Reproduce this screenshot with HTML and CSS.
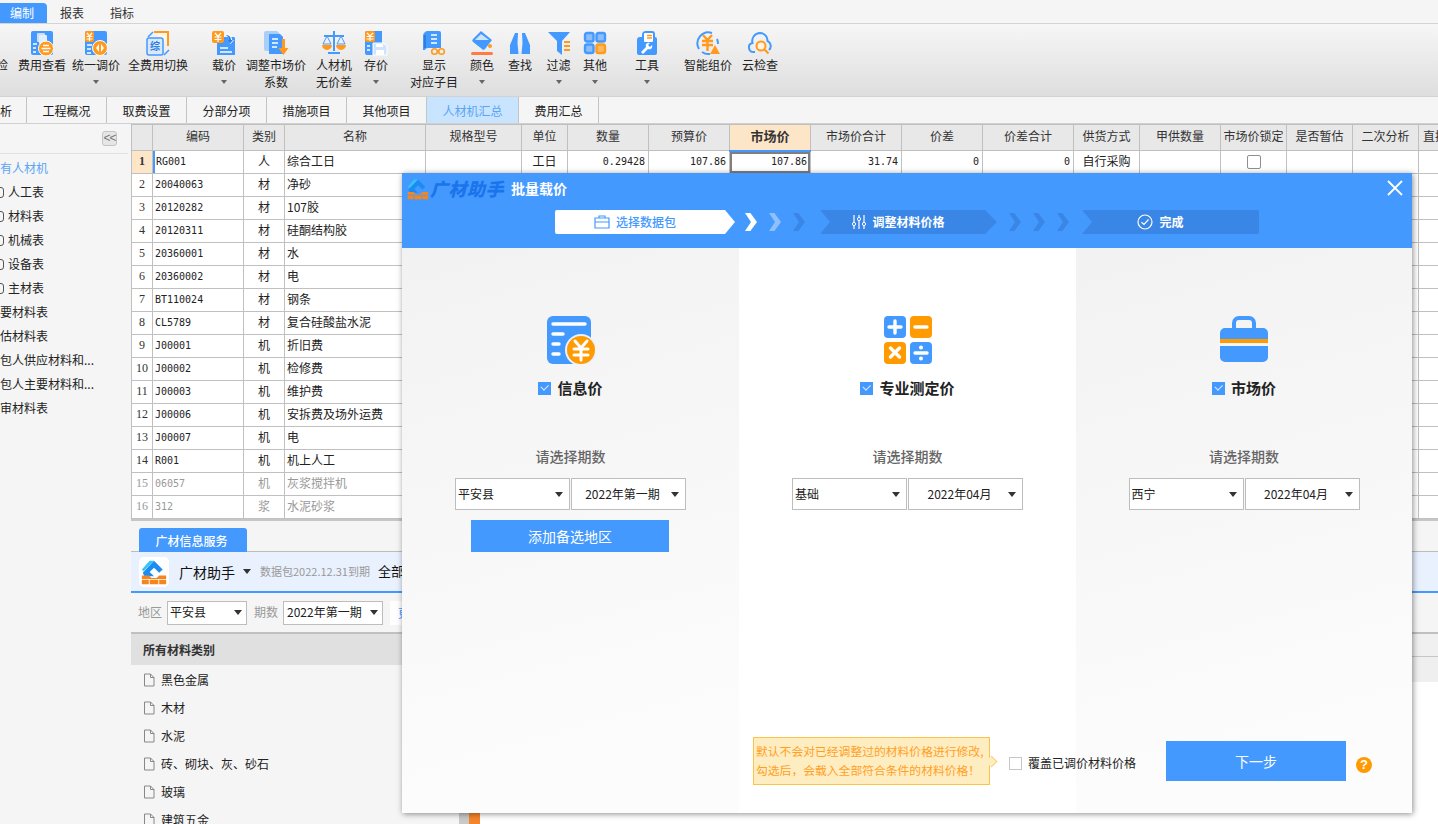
FILE: index.html
```html
<!DOCTYPE html>
<html lang="zh-CN">
<head>
<meta charset="utf-8">
<title>批量载价</title>
<link rel="stylesheet" href="styles.css">
</head>
<body>
<svg class="defs" width="0" height="0" aria-hidden="true">
  <symbol id="logo" viewBox="0 0 30 30">
    <path d="M15 2 25 12 21 16 15 10 10 15 15 20H4L2 16Z" fill="#1c8cf5"/>
    <path d="M10 2h5L3 14 1 12Z" fill="#35c4f5"/>
    <path d="M1 19h8l3 3h6l3-3h8v4H1ZM1 24h8v5H1ZM10 24h10v5H10ZM21 24h8v5h-8Z" fill="#f5851f"/>
  </symbol>
  <symbol id="file" viewBox="0 0 12 14">
    <path d="M1.500 1h6l3.500 3.500v8.500h-9.500ZM7.500 1v3.500h3.500" fill="none" stroke="#888" stroke-width="1"/>
  </symbol>
</svg>
<div class="app">
  <nav class="menu">
    <span class="menu-item active">编制</span>
    <span class="menu-item">报表</span>
    <span class="menu-item">指标</span>
  </nav>

  <div class="ribbon">
    <div class="rb w48"><div class="ic"></div><span>自检</span></div>
    <div class="rb w44"><svg class="ic" width="24" height="25" viewBox="0 0 24 25"><rect x="1" width="22" height="24" rx="2" fill="#4499ff"/><rect x="7" y="2" width="8" height="9" rx="1" fill="#c9def8"/><rect x="9" y="4" width="8" height="9" rx="1" fill="#e4eefb"/><path d="M3 13h4M3 17h3M3 21h3" stroke="#fff" stroke-width="1.6"/><circle cx="16" cy="17.500" r="7.500" fill="#ff9a1f" stroke="#fff"/><path d="M11.500 17.500h9M13 14.500h6M13 20.500h6" stroke="#fff" stroke-width="1.500"/></svg><span>费用查看</span><i class="caret none"></i></div>
    <div class="rb w64"><svg class="ic" width="24" height="25" viewBox="0 0 24 25"><rect x="1" width="22" height="24" rx="2" fill="#4499ff"/><rect x="1" width="9" height="11" rx="2" fill="#ff9a1f"/><path d="M3 2l2.500 3L8 2M2.500 5.500h6M2.500 8h6M5.500 5v5" stroke="#fff" stroke-width="1.200" fill="none"/><path d="M3 14h5M3 18h4M3 22h4" stroke="#fff" stroke-width="1.600"/><circle cx="16" cy="17" r="7.500" fill="#ff9a1f" stroke="#fff"/><path d="M15 13v8l-3-4ZM17 13v8l3-4Z" fill="#fff"/></svg><span>统一调价</span><i class="caret"></i></div>
    <div class="rb w60"><svg class="ic" width="24" height="25" viewBox="0 0 24 25"><path d="M8 1h14v14" fill="#fff6e8" stroke="#ff9a1f" stroke-width="2"/><rect x="1" y="7" width="16" height="17" rx="2" fill="#d9e8fb" stroke="#4499ff" stroke-width="1.500"/><text x="9" y="19" class="ic-text">综</text><path d="M2 6 7 1M18 24l5-5" stroke="#4499ff" stroke-width="1.500"/></svg><span>全费用切换</span></div>
    <div class="rb w44 ml14"><svg class="ic" width="24" height="25" viewBox="0 0 24 25"><path d="M4 6h18a1.500 1.500 0 0 1 1 1.500V24H5V10Z" fill="#4499ff"/><rect x="0" y="0" width="12" height="12" rx="2" fill="#ff9a1f"/><path d="M3 2l3 3.500L9 2M2.500 6h7M2.500 8.500h7M6 5.500V11" stroke="#fff" stroke-width="1.200" fill="none"/><path d="M8 17h8M8 21h12" stroke="#fff" stroke-width="1.600"/><path d="M14 3c4 0 6 3 6 6h2l-3.500 4L15 9h2c0-2-1-4-3-6Z" fill="#fff"/><path d="M14 4c3.500 0 5 2.500 5 5h2l-3 3.500L15 9h2c0-2-1-4-3-5Z" fill="#2f7fe0"/></svg><span>载价</span><i class="caret"></i></div>
    <div class="rb w60"><svg class="ic" width="26" height="25" viewBox="0 0 26 25"><path d="M3 0h11l6 6v14H3a2 2 0 0 1-2-2V2a2 2 0 0 1 2-2Z" fill="#a9cff8"/><path d="M6 3h11l3 3v17H6Z" fill="#4499ff"/><path d="M9 8h6M9 12h6M9 16h5" stroke="#fff" stroke-width="1.600"/><path d="M19 8h3v9h3.500L20.500 24 15.500 17H19Z" fill="#ff9a1f"/></svg><span>调整市场价</span><span>系数</span></div>
    <div class="rb w56"><svg class="ic" width="24" height="25" viewBox="0 0 24 25"><path d="M12 0v20M2 5h20M6 22h12" stroke="#4499ff" stroke-width="2"/><path d="M5 5 1 13h8ZM19 5l-4 8h8Z" fill="none" stroke="#4499ff"/><path d="M0 14h10a5 5 0 0 1-10 0ZM14 14h10a5 5 0 0 1-10 0Z" fill="#ff9a1f"/></svg><span>人材机</span><span>无价差</span></div>
    <div class="rb w28"><svg class="ic" width="24" height="25" viewBox="0 0 24 25"><path d="M3 0h15v24H3a2 2 0 0 1-2-2V2a2 2 0 0 1 2-2Z" fill="#4499ff"/><rect x="1" width="10" height="11" rx="2" fill="#ff9a1f"/><path d="M3 2l3 3 3-3M2.500 5.500h7M2.500 8h7M6 5v5" stroke="#fff" stroke-width="1.200" fill="none"/><path d="M3 15h3M3 19h3" stroke="#fff" stroke-width="1.500"/><path d="M9 12h10l4 3v9H9Z" fill="#cfe3fb" stroke="#fff"/><rect x="12" y="13" width="7" height="3" fill="#fff"/><rect x="12" y="19" width="8" height="5" fill="#fff"/></svg><span>存价</span><i class="caret"></i></div>
    <div class="rb w48 ml20"><svg class="ic" width="24" height="25" viewBox="0 0 24 25"><path d="M6 0h11a2 2 0 0 1 2 2v15H6a3 3 0 0 0-3 2h-2V5a5 5 0 0 1 5-5Z" fill="#4499ff"/><path d="M3 4v13" stroke="#2f7fe0" stroke-width="2"/><path d="M9 4h6M9 8h6M9 12h6" stroke="#fff" stroke-width="1.600"/><circle cx="12.500" cy="20.500" r="2.800" fill="none" stroke="#ff9a1f" stroke-width="1.600"/><circle cx="19.500" cy="20.500" r="2.800" fill="none" stroke="#ff9a1f" stroke-width="1.600"/></svg><span>显示</span><span>对应子目</span></div>
    <div class="rb w48"><svg class="ic" width="24" height="25" viewBox="0 0 24 25"><path d="M11 0 22 9l-7 9a2 2 0 0 1-3 0L3 11a2 2 0 0 1 0-3Z" fill="#4499ff"/><path d="M11 3 19 9H5Z" fill="#cfe3fb"/><circle cx="20" cy="15" r="2" fill="#ff9a1f"/><rect x="1" y="21" width="22" height="3" rx="1.500" fill="#ff7a45"/></svg><span>颜色</span><i class="caret"></i></div>
    <div class="rb w28"><svg class="ic" width="22" height="25" viewBox="0 0 22 25"><path d="M6 2h3L8.500 12l1 11H1V14ZM16 2h-3l.5 10-1 11h8.500V14Z" fill="#4499ff"/></svg><span>查找</span></div>
    <div class="rb w49"><svg class="ic" width="24" height="25" viewBox="0 0 24 25"><path d="M1 1h22l-8 9v14l-5-4v-10Z" fill="#4499ff"/><path d="M17 11h6M17 15h6M17 19h6" stroke="#ff9a1f" stroke-width="1.800"/></svg><span>过滤</span><i class="caret"></i></div>
    <div class="rb w24"><svg class="ic" width="24" height="25" viewBox="0 0 24 25"><g stroke-width="2.400" fill="#8dbdf8"><rect x="2" y="2" width="8.500" height="8.500" rx="2" stroke="#4499ff"/><rect x="13.500" y="2" width="8.500" height="8.500" rx="2" stroke="#4499ff"/><rect x="2" y="13.500" width="8.500" height="8.500" rx="2" stroke="#4499ff"/><rect x="13.500" y="13.500" width="8.500" height="8.500" rx="2" stroke="#ff9a1f" fill="#ffb95c"/></g></svg><span>其他</span><i class="caret"></i></div>
    <div class="rb w24 ml28"><svg class="ic" width="20" height="25" viewBox="0 0 20 25"><path d="M3 6h2V4a4 4 0 0 1 4-4h6a3 3 0 0 1 3 3v3h0a2 2 0 0 1 2 2v14a2 2 0 0 1-2 2H2a2 2 0 0 1-2-2V9a3 3 0 0 1 3-3Z" fill="#4499ff"/><rect x="7" y="2" width="9" height="9" rx="1" fill="#fff"/><path d="M10 4.500h5M10 7h5" stroke="#ff9a1f" stroke-width="1.400"/><path d="M4 21l5-5a3 3 0 0 1 4-4l-2 2 2 2 2-2a3 3 0 0 1-4 4l-5 5Z" fill="#fff"/></svg><span>工具</span><i class="caret"></i></div>
    <div class="rb w48 ml25"><svg class="ic" width="26" height="25" viewBox="0 0 26 25"><path d="M4 18A11 11 0 0 1 17 2" fill="none" stroke="#4499ff" stroke-width="2"/><path d="M7 21a11 11 0 0 0 8 2M22 8a11 11 0 0 1 1 5" fill="none" stroke="#4499ff" stroke-width="2"/><path d="M8 4l4.500 5L17 4M7 10h11M7 14h11M12.500 9v11" stroke="#ff9a1f" stroke-width="2.400" fill="none"/><path d="M20 14l5 9H15Z" fill="#ff9a1f"/></svg><span>智能组价</span></div>
    <div class="rb w36 ml10"><svg class="ic" width="24" height="25" viewBox="0 0 24 25"><path d="M7 21H5.500a4.500 4.500 0 0 1-1-8.900A8 8 0 0 1 12 2a7.500 7.500 0 0 1 7.500 8 5.500 5.500 0 0 1 1.500 9" fill="none" stroke="#4499ff" stroke-width="2"/><circle cx="13" cy="15" r="4.500" fill="#fff4e4" stroke="#ff9a1f" stroke-width="2"/><path d="M16.500 18.500l4 4" stroke="#ff9a1f" stroke-width="2.200"/></svg><span>云检查</span></div>
  </div>

  <div class="tabs">
    <span class="tab first">分析</span>
    <span class="tab">工程概况</span>
    <span class="tab">取费设置</span>
    <span class="tab">分部分项</span>
    <span class="tab">措施项目</span>
    <span class="tab">其他项目</span>
    <span class="tab current">人材机汇总</span>
    <span class="tab">费用汇总</span>
  </div>

  <div class="workspace">
    <aside class="side">
      <div class="side-top"><span class="collapse">&lt;&lt;</span></div>
      <ul class="tree">
        <li class="root">所有人材机</li>
        <li class="sub">人工表</li>
        <li class="sub">材料表</li>
        <li class="sub">机械表</li>
        <li class="sub">设备表</li>
        <li class="sub">主材表</li>
        <li>主要材料表</li>
        <li>暂估材料表</li>
        <li>发包人供应材料和...</li>
        <li>发包人主要材料和...</li>
        <li>送审材料表</li>
      </ul>
    </aside>

    <main class="main">
      <div class="grid-wrap">
        <table class="grid">
          <colgroup>
            <col class="c21"><col class="c91"><col class="c41"><col class="c141"><col class="c96"><col class="c46"><col class="c81"><col class="c81"><col class="c81"><col class="c91"><col class="c81"><col class="c91"><col class="c66"><col class="c81"><col class="c66"><col class="c66"><col class="c66"><col class="c66">
          </colgroup>
          <thead>
            <tr><th></th><th>编码</th><th>类别</th><th>名称</th><th>规格型号</th><th>单位</th><th>数量</th><th>预算价</th><th class="hl">市场价</th><th>市场价合计</th><th>价差</th><th>价差合计</th><th>供货方式</th><th>甲供数量</th><th>市场价锁定</th><th>是否暂估</th><th>二次分析</th><th class="cut">直接费</th></tr>
          </thead>
          <tbody>
            <tr class="first-row"><td class="no on">1</td><td class="code mark">RG001</td><td class="ct">人</td><td>综合工日</td><td></td><td class="ct">工日</td><td class="num">0.29428</td><td class="num">107.86</td><td class="num sel">107.86</td><td class="num">31.74</td><td class="num">0</td><td class="num">0</td><td class="ct">自行采购</td><td></td><td class="ct"><span class="lock"></span></td><td></td><td></td><td></td></tr>
            <tr><td class="no">2</td><td class="code">20040063</td><td class="ct">材</td><td>净砂</td><td colspan="13"></td><td></td></tr>
            <tr><td class="no">3</td><td class="code">20120282</td><td class="ct">材</td><td>107胶</td><td colspan="13"></td><td></td></tr>
            <tr><td class="no">4</td><td class="code">20120311</td><td class="ct">材</td><td>硅酮结构胶</td><td colspan="13"></td><td></td></tr>
            <tr><td class="no">5</td><td class="code">20360001</td><td class="ct">材</td><td>水</td><td colspan="13"></td><td></td></tr>
            <tr><td class="no">6</td><td class="code">20360002</td><td class="ct">材</td><td>电</td><td colspan="13"></td><td></td></tr>
            <tr><td class="no">7</td><td class="code">BT110024</td><td class="ct">材</td><td>钢条</td><td colspan="13"></td><td></td></tr>
            <tr><td class="no">8</td><td class="code">CL5789</td><td class="ct">材</td><td>复合硅酸盐水泥</td><td colspan="13"></td><td></td></tr>
            <tr><td class="no">9</td><td class="code">J00001</td><td class="ct">机</td><td>折旧费</td><td colspan="13"></td><td></td></tr>
            <tr><td class="no">10</td><td class="code">J00002</td><td class="ct">机</td><td>检修费</td><td colspan="13"></td><td></td></tr>
            <tr><td class="no">11</td><td class="code">J00003</td><td class="ct">机</td><td>维护费</td><td colspan="13"></td><td></td></tr>
            <tr><td class="no">12</td><td class="code">J00006</td><td class="ct">机</td><td>安拆费及场外运费</td><td colspan="13"></td><td></td></tr>
            <tr><td class="no">13</td><td class="code">J00007</td><td class="ct">机</td><td>电</td><td colspan="13"></td><td></td></tr>
            <tr><td class="no">14</td><td class="code">R001</td><td class="ct">机</td><td>机上人工</td><td colspan="13"></td><td></td></tr>
            <tr class="muted"><td class="no">15</td><td class="code">06057</td><td class="ct">机</td><td>灰浆搅拌机</td><td colspan="13"></td><td></td></tr>
            <tr class="muted"><td class="no">16</td><td class="code">312</td><td class="ct">浆</td><td>水泥砂浆</td><td colspan="13"></td><td></td></tr>
          </tbody>
        </table>
      </div>

      <section class="service">
        <div class="svc-tabs"><span class="svc-tab">广材信息服务</span></div>
        <div class="svc-head">
          <span class="svc-logo"><svg width="26" height="26"><use href="#logo"/></svg></span>
          <span class="svc-name">广材助手</span><i class="tri"></i>
          <span class="svc-date">数据包2022.12.31到期</span>
          <span class="svc-all">全部</span>
        </div>
        <div class="svc-filter">
          <span class="flabel">地区</span>
          <span class="fsel w80"><span>平安县</span></span>
          <span class="flabel">期数</span>
          <span class="fsel w100"><span>2022年第一期</span></span>
          <span class="fmore">更多</span>
        </div>
        <div class="svc-body">
          <div class="cat">
            <div class="cat-head">所有材料类别</div>
            <ul class="cat-list">
              <li><svg width="12" height="14"><use href="#file"/></svg>黑色金属</li>
              <li><svg width="12" height="14"><use href="#file"/></svg>木材</li>
              <li><svg width="12" height="14"><use href="#file"/></svg>水泥</li>
              <li><svg width="12" height="14"><use href="#file"/></svg>砖、砌块、灰、砂石</li>
              <li><svg width="12" height="14"><use href="#file"/></svg>玻璃</li>
              <li><svg width="12" height="14"><use href="#file"/></svg>建筑五金</li>
            </ul>
          </div>
          <div class="scroll"><span class="scroll-bar"></span></div>
          <div class="scroll orange-track"><span class="scroll-thumb"></span></div>
          <div class="result">
            <div class="res-head"></div>
            <div class="res-sub"></div>
          </div>
        </div>
      </section>
    </main>
  </div>

  <div class="modal">
    <header class="m-head">
      <div class="m-title">
        <svg width="22" height="22"><use href="#logo"/></svg>
        <span class="brand">广材助手</span>
        <span class="m-name">批量载价</span>
        <svg class="close" width="16" height="16" viewBox="0 0 16 16"><path d="M1 1l14 14M15 1 1 15" stroke="#fff" stroke-width="1.800"/></svg>
      </div>
      <div class="steps">
        <div class="step done">
          <svg width="16" height="14" viewBox="0 0 16 14"><path d="M5 3V1h6v2M1 3h14v10H1ZM1 7h14" fill="none" stroke="#4499ff" stroke-width="1.200"/></svg>
          <span>选择数据包</span>
        </div>
        <div class="chevs first-chevs"><i class="chev w"></i><i class="chev l"></i><i class="chev d"></i></div>
        <div class="step dark">
          <svg width="14" height="16" viewBox="0 0 14 16"><path d="M2 1v14M7 1v14M12 1v14" stroke="#fff" stroke-width="1.200"/><circle cx="2" cy="10" r="1.600" fill="#3a86e6" stroke="#fff"/><circle cx="7" cy="5" r="1.600" fill="#3a86e6" stroke="#fff"/><circle cx="12" cy="10" r="1.600" fill="#3a86e6" stroke="#fff"/></svg>
          <span>调整材料价格</span>
        </div>
        <div class="chevs"><i class="chev d"></i><i class="chev d"></i><i class="chev d"></i></div>
        <div class="step dark last">
          <svg width="16" height="16" viewBox="0 0 16 16"><circle cx="8" cy="8" r="7" fill="none" stroke="#fff" stroke-width="1.200"/><path d="M4.500 8.200 7 10.500l4.500-5" fill="none" stroke="#fff" stroke-width="1.200"/></svg>
          <span>完成</span>
        </div>
      </div>
    </header>

    <div class="m-body">
      <section class="col tint">
        <svg class="col-ic" width="48" height="48" viewBox="0 0 48 48"><rect width="44" height="48" rx="6" fill="#4499ff"/><path d="M6 8h32M6 18h10M6 28h6M6 38h6" stroke="#fff" stroke-width="3.400" stroke-linecap="round"/><circle cx="34" cy="34" r="16" fill="#e8f1fd"/><circle cx="34" cy="34" r="14" fill="#ff9a00"/><path d="M28 25l6 7 6-7M27 33h14M27 39h14M34 32v12" fill="none" stroke="#fff" stroke-width="3" stroke-linecap="round"/></svg>
        <div class="pick"><span class="cb"></span><span>信息价</span></div>
        <div class="ask">请选择期数</div>
        <div class="sel-row"><span class="sel-box"><span>平安县</span></span><span class="sel-box mid"><span>2022年第一期</span></span></div>
        <button class="add">添加备选地区</button>
      </section>
      <section class="col">
        <svg class="col-ic" width="48" height="48" viewBox="0 0 48 48"><rect width="22" height="22" rx="4" fill="#4499ff"/><rect x="26" width="22" height="22" rx="4" fill="#ff9a00"/><rect y="26" width="22" height="22" rx="4" fill="#ff9a00"/><rect x="26" y="26" width="22" height="22" rx="4" fill="#4499ff"/><path d="M11 5v12M5 11h12M31 11h12M6.500 32l9 9M15.500 32l-9 9M31 37h12" stroke="#fff" stroke-width="3.400" stroke-linecap="round"/><circle cx="37" cy="31.500" r="2" fill="#fff"/><circle cx="37" cy="42.500" r="2" fill="#fff"/></svg>
        <div class="pick"><span class="cb"></span><span>专业测定价</span></div>
        <div class="ask">请选择期数</div>
        <div class="sel-row"><span class="sel-box"><span>基础</span></span><span class="sel-box mid"><span>2022年04月</span></span></div>
      </section>
      <section class="col tint">
        <svg class="col-ic" width="48" height="48" viewBox="0 0 48 48"><path d="M14 13V7a5 5 0 0 1 5-5h10a5 5 0 0 1 5 5v6" fill="none" stroke="#4499ff" stroke-width="4"/><path d="M5 12h38a5 5 0 0 1 5 5v6H0v-6a5 5 0 0 1 5-5ZM0 30h48v11a5 5 0 0 1-5 5H5a5 5 0 0 1-5-5Z" fill="#4499ff"/><rect y="23" width="48" height="4" fill="#ff9a00"/></svg>
        <div class="pick"><span class="cb"></span><span>市场价</span></div>
        <div class="ask">请选择期数</div>
        <div class="sel-row"><span class="sel-box"><span>西宁</span></span><span class="sel-box mid"><span>2022年04月</span></span></div>
      </section>
    </div>

    <footer class="m-foot">
      <div class="tip">默认不会对已经调整过的材料价格进行修改,<br>勾选后，会载入全部符合条件的材料价格！</div>
      <label class="cover"><span class="cover-box"></span>覆盖已调价材料价格</label>
      <button class="next">下一步</button>
      <span class="help">?</span>
    </footer>
  </div>
</div>
</body>
</html>
```

FILE: styles.css
```css
* { box-sizing: border-box; }
html, body { margin: 0; height: 100%; overflow: hidden; }
body { font: 12px/1.4 "Noto Sans CJK SC", "Liberation Sans", sans-serif; color: #222; background: #fff; }
.defs { position: absolute; }
ul { list-style: none; margin: 0; padding: 0; }
.app { position: relative; width: 1438px; height: 824px; display: flex; flex-direction: column; overflow: hidden; }

.menu { height: 24px; flex: none; display: flex; align-items: flex-end; background: #f5f5f5; border-bottom: 1px solid #d4d4d4; }
.menu-item { width: 50px; height: 20px; line-height: 20px; text-align: center; color: #333; }
.menu-item.active { width: 47px; padding-right: 3px; background: #4499ff; color: #fff; border-radius: 0 4px 0 0; }

.ribbon { height: 73px; flex: none; display: flex; margin-left: -28px; background: linear-gradient(#f6f6f6, #dedede); border-bottom: 1px solid #d2d2d2; padding-top: 7px; }
.rb { flex: none; display: flex; flex-direction: column; align-items: center; line-height: 17px; color: #222; white-space: nowrap; }
.rb .ic { height: 25px; flex: none; display: block; }
.caret { width: 0; height: 0; margin-top: 7px; border: 3.500px solid transparent; border-top: 4px solid #666; border-bottom: 0; }
.caret.none { visibility: hidden; }
.ic-text { font-size: 10px; fill: #2f7fe0; text-anchor: middle; font-weight: 700; }
.w24 { width: 24px; } .w28 { width: 28px; } .w36 { width: 36px; } .w44 { width: 44px; }
.w48 { width: 48px; } .w49 { width: 49px; } .w56 { width: 56px; } .w60 { width: 60px; } .w64 { width: 64px; }
.ml10 { margin-left: 10px; } .ml14 { margin-left: 14px; } .ml20 { margin-left: 20px; } .ml25 { margin-left: 25px; } .ml28 { margin-left: 28px; }

.tabs { height: 27px; flex: none; display: flex; background: #f5f5f5; border-bottom: 1px solid #cfcfcf; }
.tab { flex: none; width: 80px; height: 26px; line-height: 28px; text-align: center; border-right: 1px solid #c4c4c4; color: #222; white-space: nowrap; }
.tab.first { width: 27px; text-indent: -26px; overflow: hidden; }
.tab.current { width: 92px; background: #c8e4ff; color: #5aa5f5; }

.workspace { flex: 1; min-height: 0; display: flex; }
.side { flex: none; width: 131px; background: #f5f5f5; overflow: hidden; }
.side-top { height: 30px; margin-right: 3px; padding: 7px 11px 0 0; display: flex; justify-content: flex-end; border-bottom: 1px solid #e2e2e2; }
.collapse { width: 15px; height: 15px; border: 1px solid #c4c4c4; border-radius: 3px; background: #e6e6e6; font: 12px/13px "Liberation Sans", sans-serif; color: #777; text-align: center; letter-spacing: -1px; }
.tree { padding-top: 2px; margin-left: -12px; }
.tree li { height: 24px; line-height: 24px; color: #222; white-space: nowrap; position: relative; }
.tree .root { color: #5aa5f5; }
.tree .sub { padding-left: 20px; }
.tree .sub::before { content: ""; position: absolute; left: 6px; top: 7px; width: 8px; height: 9px; border: 1px solid #555; border-radius: 3px; }

.main { flex: 1; min-width: 0; display: flex; flex-direction: column; }
.grid-wrap { height: 395px; flex: none; overflow: hidden; background: #fff; }
.grid { table-layout: fixed; width: 1353px; border-collapse: collapse; }
.c21 { width: 21px; } .c41 { width: 41px; } .c46 { width: 46px; } .c66 { width: 66px; } .c81 { width: 81px; }
.c91 { width: 91px; } .c96 { width: 96px; } .c141 { width: 141px; }
.grid th, .grid td { border: 1px solid #c0c0c0; padding: 0 2px 2px; overflow: hidden; white-space: nowrap; font-size: 12px; }
.grid th { height: 26px; background: #e8e8e8; font-weight: 400; color: #333; }
.grid th.hl { background: #fde5c8; font-weight: 700; font-size: 13px; border-bottom: 2px solid #4499ff; }
.grid th.cut { text-align: left; padding-left: 4px; }
.grid td { height: 23px; background: #fff; color: #222; }
.grid .no { text-align: center; font: 12px "Liberation Serif", serif; color: #333; padding: 0 0 2px; }
.grid .no.on { background: #fde5c8; font-weight: 700; }
.grid .code { font: 10px "DejaVu Sans Mono", monospace; }
.grid .mark { box-shadow: inset 2px 0 0 #4499ff; padding-left: 3px; }
.grid .ct { text-align: center; }
.grid .num { text-align: right; font: 10px "DejaVu Sans Mono", monospace; padding-right: 3px; }
.grid .sel { box-shadow: inset 0 0 0 2px #7f7f7f; }
.lock { display: block; width: 14px; height: 14px; margin: 2px auto 0; border: 1px solid #8f8f8f; border-radius: 2px; background: #fff; }
.muted td, .grid .muted .no { color: #999; }

.service { flex: 1; min-height: 0; display: flex; flex-direction: column; background: #f5f5f5; border-top: 2px solid #c6c6c6; }
.svc-tabs { height: 31px; flex: none; padding: 7px 0 0 8px; border-bottom: 1px solid #bcbcbc; }
.svc-tab { display: block; width: 108px; height: 24px; line-height: 25px; padding-right: 3px; background: #4499ff; color: #fff; font-weight: 500; text-align: center; border-radius: 3px 3px 0 0; }
.svc-head { height: 41px; flex: none; display: flex; align-items: center; padding-left: 8px; background: #e9f1fe; border-bottom: 2px solid #4499ff; }
.svc-logo { width: 30px; height: 30px; flex: none; background: #fff; border-radius: 5px; display: flex; align-items: center; justify-content: center; }
.svc-name { margin-left: 10px; font-size: 14px; color: #111; padding-top: 2px; }
.tri { width: 0; height: 0; margin-left: 8px; border: 4px solid transparent; border-top: 5px solid #333; border-bottom: 0; }
.svc-date { margin-left: 9px; font-size: 11px; color: #999; }
.svc-all { margin-left: 8px; font-size: 13px; color: #111; }
.svc-filter { height: 39px; flex: none; display: flex; align-items: center; padding: 0 0 0 7px; }
.flabel { color: #999; margin-right: 5px; }
.fsel { height: 24px; display: flex; align-items: center; justify-content: space-between; padding: 0 4px 0 2px; margin-right: 7px; background: #fff; border: 1px solid #bdbdbd; color: #222; }
.fsel.w100 { padding-left: 3px; }
.fsel::after { content: ""; border: 4px solid transparent; border-top: 5px solid #333; border-bottom: 0; }
.w80 { width: 80px; } .w100 { width: 100px; }
.fmore { height: 24px; line-height: 24px; padding: 0 8px; background: #fff; color: #4499ff; }
.svc-body { flex: 1; min-height: 0; display: flex; border-top: 2px solid #c0c0c0; }
.cat { width: 328px; flex: none; }
.cat-head { height: 31px; line-height: 31px; padding-left: 12px; background: #e0e0e0; font-weight: 700; color: #333; }
.cat-list { padding-top: 1px; }
.cat-list li { height: 28px; display: flex; align-items: center; gap: 6px; padding-left: 12px; color: #222; white-space: nowrap; }
.scroll { width: 10px; flex: none; display: flex; align-items: flex-end; }
.orange-track { width: 11px; }
.scroll-bar { display: block; width: 100%; height: 11px; background: #c9c9c9; }
.scroll-thumb { display: block; width: 100%; height: 11px; background: #f5852a; }
.result { flex: 1; background: #fff; }
.res-head { height: 23px; background: #f0f0f0; border-bottom: 1px solid #c6c6c6; }
.res-sub { height: 25px; background: #efefef; }

.modal { position: absolute; left: 402px; top: 173px; width: 1010px; height: 640px; display: flex; flex-direction: column; background: #fff; box-shadow: 1px 1px 6px rgba(0, 0, 0, .45); }
.m-head { height: 75px; flex: none; background: #4499ff; padding: 5px 0 0 5px; }
.m-title { height: 32px; display: flex; align-items: flex-start; position: relative; }
.brand { margin-left: 1px; font-size: 18px; line-height: 21px; font-weight: 900; font-style: italic; color: #1a74ec; letter-spacing: .5px; }
.m-name { margin-left: 7px; font-size: 14px; line-height: 21px; font-weight: 700; color: #fff; }
.close { position: absolute; right: 9px; top: 2px; }
.steps { display: flex; align-items: center; padding-left: 148px; }
.step { flex: none; width: 180px; height: 24px; padding-right: 20px; display: flex; align-items: center; justify-content: center; gap: 6px; color: #fff; font-weight: 700; font-size: 12px; border-radius: 2px; }
.step.done { background: #fff; color: #4499ff; clip-path: polygon(0 0, 170px 0, 100% 50%, 170px 100%, 0 100%); font-weight: 500; }
.step.dark { background: #3a86e6; width: 177px; clip-path: polygon(0 0, 165px 0, 100% 50%, 165px 100%, 0 100%, 10px 50%); }
.step.last { clip-path: polygon(0 0, 100% 0, 100% 100%, 0 100%, 10px 50%); }
.chevs { width: 85px; flex: none; display: flex; gap: 12px; padding-left: 12px; }
.first-chevs { padding-left: 10px; }
.chev { width: 12px; height: 18px; flex: none; clip-path: polygon(0 0, 45% 0, 100% 50%, 45% 100%, 0 100%, 50% 50%); }
.chev.w { background: #fff; }
.chev.l { background: #8fc0fb; }
.chev.d { background: #3a86e6; }

.m-body { flex: 1; min-height: 0; display: grid; grid-template-columns: 337px 337px 336px; }
.col { display: flex; flex-direction: column; align-items: center; padding-top: 68px; background: #fff; }
.col.tint { background: linear-gradient(165deg, #f2f2f2, #fcfcfc 85%); }
.col-ic { display: block; flex: none; }
.pick { margin-top: 14px; height: 20px; display: flex; align-items: center; gap: 6px; font-size: 15px; font-weight: 700; color: #222; line-height: 20px; }
.cb { width: 13px; height: 13px; background: #4499ff; position: relative; }
.cb::after { content: ""; position: absolute; left: 3px; top: 2.500px; width: 6px; height: 3.500px; border-left: 1.200px solid #dbe9fb; border-bottom: 1.200px solid #dbe9fb; transform: rotate(-45deg); }
.ask { margin-top: 48px; height: 20px; line-height: 20px; font-size: 14px; font-weight: 500; color: #666; }
.sel-row { margin-top: 12px; display: flex; gap: 1px; }
.sel-box { width: 115px; height: 32px; display: flex; align-items: center; justify-content: space-between; padding: 0 6px 0 2px; background: #fff; border: 1px solid #bdbdbd; color: #222; font-size: 12px; }
.sel-box::after { content: ""; border: 4px solid transparent; border-top: 5px solid #333; border-bottom: 0; }
.sel-box.mid span { flex: 1; text-align: center; }
.add { margin: 10px 1px 0 0; width: 198px; height: 32px; border: 0; background: #4499ff; color: #fff; font: 14px "Noto Sans CJK SC", sans-serif; }

.m-foot { position: absolute; left: 351px; top: 564px; width: 624px; height: 48px; display: flex; align-items: center; }
.tip { position: relative; width: 237px; height: 48px; flex: none; padding: 3px 0 0 2px; background: #ffedc2; border: 1px solid #fbc34a; color: #ffa01f; line-height: 19px; white-space: nowrap; font-size: 11.800px; }
.tip::after { content: ""; position: absolute; right: -8px; top: 18px; width: 10px; height: 10px; background: #ffedc2; border-top: 1px solid #fbc34a; border-right: 1px solid #fbc34a; transform: rotate(45deg) scale(.75); }
.cover { margin: 5px 0 0 19px; display: flex; align-items: center; gap: 6px; color: #222; white-space: nowrap; }
.cover-box { width: 13px; height: 13px; background: #fff; border: 1px solid #c6c6c6; }
.next { margin-left: 30px; flex: none; width: 180px; height: 40px; border: 0; background: #4499ff; color: #fff; font: 14px "Noto Sans CJK SC", sans-serif; }
.help { margin-left: 10px; flex: none; width: 16px; height: 16px; margin-top: 8px; border-radius: 50%; background: #ff9a00; color: #fff; font: 700 13px/16px "Liberation Sans", sans-serif; text-align: center; }
```
